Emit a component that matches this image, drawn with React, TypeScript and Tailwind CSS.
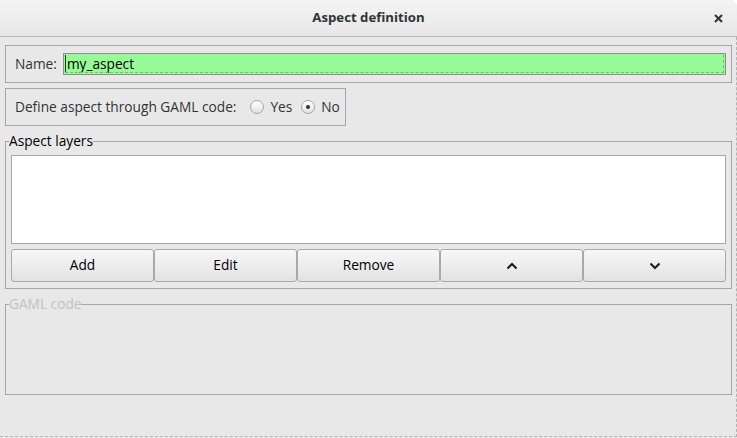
import React from "react";

function Radio({ checked, label }: { checked?: boolean; label: string }) {
  return (
    <label className="flex items-center gap-[6px]">
      <span className="w-[14px] h-[14px] rounded-full border border-[#a4a4a4] bg-gradient-to-b from-[#ffffff] to-[#e2e2e2] flex items-center justify-center">
        {checked && <span className="w-[4px] h-[4px] rounded-full bg-[#2e3436]" />}
      </span>
      <span>{label}</span>
    </label>
  );
}

function ToolButton({ children }: { children: React.ReactNode }) {
  return (
    <button className="h-[33px] border border-[#a9a9a9] rounded-[3px] bg-gradient-to-b from-[#f7f7f7] to-[#e3e3e3] text-black flex items-center justify-center">
      {children}
    </button>
  );
}

export default function App() {
  return (
    <div className="w-[737px] h-[438px] bg-[#e8e8e8] rounded-tr-[7px] overflow-hidden flex flex-col font-['Open_Sans',sans-serif] text-[13.7px] text-[#2e3436]">
      {/* title bar */}
      <header className="h-[37px] shrink-0 grid grid-cols-[1fr_auto_1fr] items-center bg-gradient-to-b from-[#f4f4f4] to-[#e7e7e7] border-b border-[#b6b6b6]">
        <div />
        <h1 className="font-bold text-[13.2px] text-[#2e3436]">Aspect definition</h1>
        <div className="flex justify-end pr-[14px]">
          <svg width="9" height="9" viewBox="0 0 9 9">
            <path d="M1 1 L8 8 M8 1 L1 8" stroke="#2e3436" strokeWidth="2" />
          </svg>
        </div>
      </header>

      {/* body */}
      <main className="h-[400px] shrink-0 border-r border-b border-dashed border-[#b4b4b4] pl-[5px] pr-[4px] pt-[8px] flex flex-col">
        <div className="h-[38px] border border-[#a6a6a6] flex items-center pl-[9px] pr-[5px] gap-[6px]">
          <span>Name:</span>
          <div className="relative flex-1 h-[22px] border border-[#8e8e8e] bg-[#98fb98] flex items-center">
            <span className="w-[1px] h-[18px] bg-[#2e3436] ml-[1px]" />
            <span className="text-black pl-[1px]">my_aspect</span>
            <div className="absolute left-[1px] right-[1px] top-[1px] bottom-[1px] border-b border-r border-dashed border-[#7ab87a]" />
          </div>
        </div>

        <div className="mt-[5px] w-[341px] h-[38px] border border-[#a6a6a6] flex items-center pl-[9px] gap-[14px]">
          <span>Define aspect through GAML code:</span>
          <div className="flex items-center gap-[9px]">
            <Radio label="Yes" />
            <Radio label="No" checked />
          </div>
        </div>

        <fieldset className="mt-[6px] border border-[#a6a6a6] px-[5px] pb-[6px]">
          <legend className="-ml-[2px] leading-[18px] text-black">Aspect layers</legend>
          <div className="mt-[5px] h-[89px] bg-white border border-[#a6a6a6]" />
          <div className="mt-[5px] grid grid-cols-5">
            <ToolButton>Add</ToolButton>
            <ToolButton>Edit</ToolButton>
            <ToolButton>Remove</ToolButton>
            <ToolButton>
              <svg width="12" height="8" viewBox="0 0 12 8">
                <path d="M1.5 6.5 L6 2 L10.5 6.5" stroke="#1a1a1a" strokeWidth="2" fill="none" />
              </svg>
            </ToolButton>
            <ToolButton>
              <svg width="12" height="8" viewBox="0 0 12 8">
                <path d="M1.5 1.5 L6 6 L10.5 1.5" stroke="#1a1a1a" strokeWidth="2" fill="none" />
              </svg>
            </ToolButton>
          </div>
        </fieldset>

        <fieldset className="mt-[6px] h-[100px] border border-[#a6a6a6]">
          <legend className="ml-[3px] leading-[18px] text-[#c2c2c2]">GAML code</legend>
        </fieldset>
      </main>
    </div>
  );
}
